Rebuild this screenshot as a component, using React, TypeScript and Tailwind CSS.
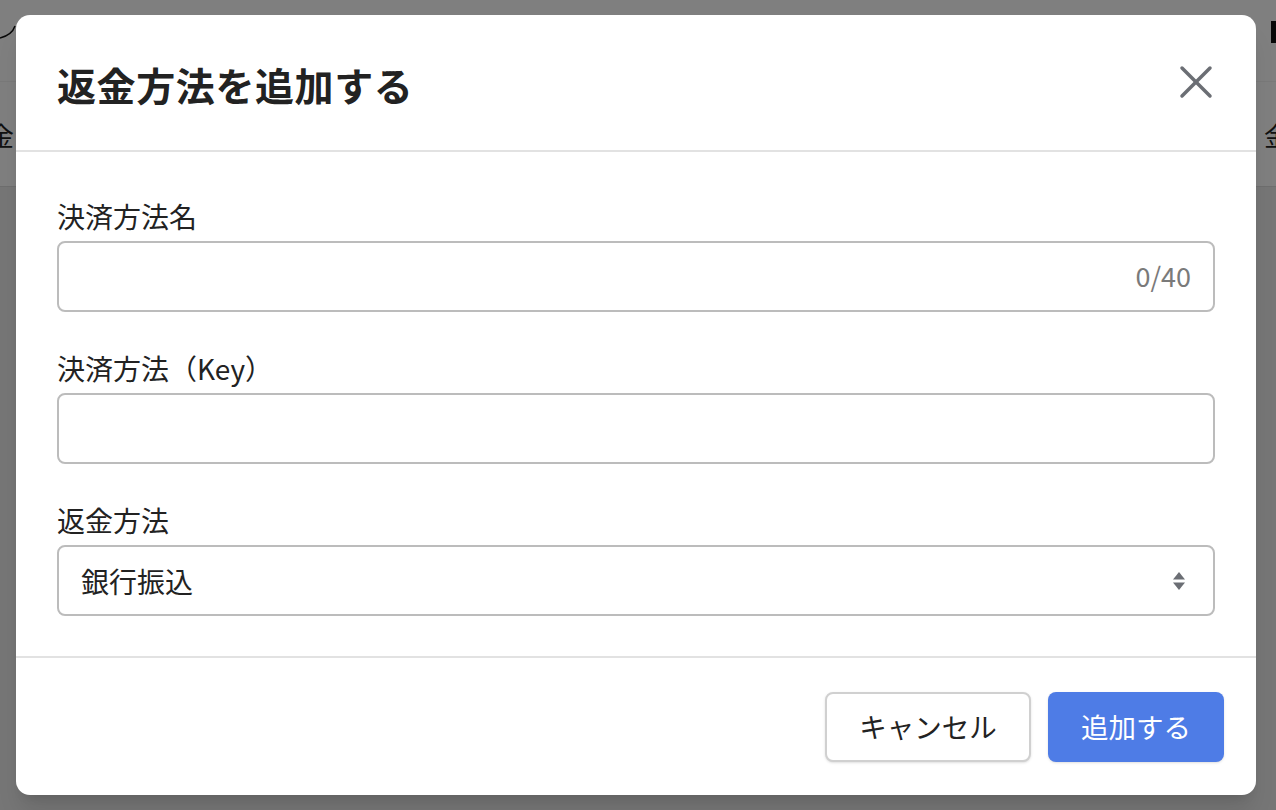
import { useState } from "react";

const font = { fontFamily: '"Noto Sans CJK JP", "Noto Sans", sans-serif' };

function CloseIcon() {
  return (
    <svg width="36" height="36" viewBox="0 0 36 36" fill="none" stroke="#6b6e74" strokeWidth="3.5" strokeLinecap="round">
      <line x1="4" y1="4" x2="32" y2="32" />
      <line x1="32" y1="4" x2="4" y2="32" />
    </svg>
  );
}

function SelectArrows() {
  return (
    <svg width="16" height="22" viewBox="0 0 16 22" fill="#6b6e74">
      <path d="M8 2 L14 9.5 H2 Z" />
      <path d="M8 20 L14 12.5 H2 Z" />
    </svg>
  );
}

export default function App() {
  const [name, setName] = useState("");
  const [key, setKey] = useState("");
  const [method, setMethod] = useState("銀行振込");

  return (
    <div className="relative w-[1276px] h-[810px] overflow-hidden bg-[#ececec]" style={font}>
      {/* 背後のページ */}
      <div className="h-[82px] bg-white border-b border-[#f2f2f2] flex items-start justify-between">
        <svg width="20" height="40" viewBox="0 0 20 40" fill="none" stroke="#111" strokeWidth="1.5">
          <path d="M0 38 C8 36 13 32 15 26" />
        </svg>
        <div className="w-[5px] h-[22px] bg-[#111] mt-[21px]" />
      </div>
      <div className="h-[105px] bg-white border-b border-[#dcdcdc] flex items-center justify-between text-[26px] text-[#222]">
        <span className="ml-[-12px]">金</span>
        <span className="mr-[-14px]">金</span>
      </div>

      {/* オーバーレイ */}
      <div className="absolute inset-0 bg-black/50 flex items-start pl-[16px] pt-[15px]">
        <div className="w-[1240px] h-[780px] bg-white rounded-[14px] flex flex-col shadow-xl">
          {/* ヘッダー */}
          <div className="h-[137px] shrink-0 flex items-center justify-between pl-[41px] pr-[42px] border-b-2 border-[#e2e2e2]">
            <h2 className="text-[39px] font-bold text-[#222] tracking-[0.6px] mt-[3px]">返金方法を追加する</h2>
            <button className="w-[36px] h-[36px] flex items-center justify-center mt-[-2px]">
              <CloseIcon />
            </button>
          </div>

          {/* 本文 */}
          <div className="flex-1 px-[41px] pt-[46px] flex flex-col gap-[38px] border-b-2 border-[#e2e2e2]">
            <div className="flex flex-col">
              <label className="h-[36px] leading-[36px] text-[28px] text-[#222] mb-[7px]">決済方法名</label>
              <div className="h-[71px] rounded-[8px] border-2 border-[#bcbcbc] flex items-center px-[22px]">
                <input
                  value={name}
                  maxLength={40}
                  onChange={(e) => setName(e.target.value)}
                  className="flex-1 outline-none text-[28px] text-[#222] bg-transparent"
                />
                <span className="text-[27px] text-[#7a7a7a] ml-3">{name.length}/40</span>
              </div>
            </div>

            <div className="flex flex-col">
              <label className="h-[36px] leading-[36px] text-[28px] text-[#222] mb-[7px]">決済方法（Key）</label>
              <div className="h-[71px] rounded-[8px] border-2 border-[#bcbcbc] flex items-center px-[22px]">
                <input
                  value={key}
                  onChange={(e) => setKey(e.target.value)}
                  className="flex-1 outline-none text-[28px] text-[#222] bg-transparent"
                />
              </div>
            </div>

            <div className="flex flex-col">
              <label className="h-[36px] leading-[36px] text-[28px] text-[#222] mb-[7px]">返金方法</label>
              <div className="relative h-[71px] rounded-[8px] border-2 border-[#bcbcbc] flex items-center">
                <select
                  value={method}
                  onChange={(e) => setMethod(e.target.value)}
                  className="appearance-none w-full h-full bg-transparent outline-none pl-[22px] pr-[60px] text-[28px] text-[#222]"
                >
                  <option>銀行振込</option>
                  <option>クレジットカード</option>
                  <option>現金</option>
                </select>
                <div className="absolute right-[26px] top-1/2 -translate-y-1/2 pointer-events-none">
                  <SelectArrows />
                </div>
              </div>
            </div>
          </div>

          {/* フッター */}
          <div className="h-[137px] shrink-0 flex items-start justify-end gap-[17px] pt-[34px] pr-[32px]">
            <button className="w-[206px] h-[70px] rounded-[8px] border-2 border-[#d0d0d0] bg-white shadow-sm text-[27.5px] text-[#222]">
              キャンセル
            </button>
            <button className="w-[176px] h-[70px] rounded-[8px] bg-[#4e7ce6] text-[27.5px] text-white shadow-sm">
              追加する
            </button>
          </div>
        </div>
      </div>
    </div>
  );
}
